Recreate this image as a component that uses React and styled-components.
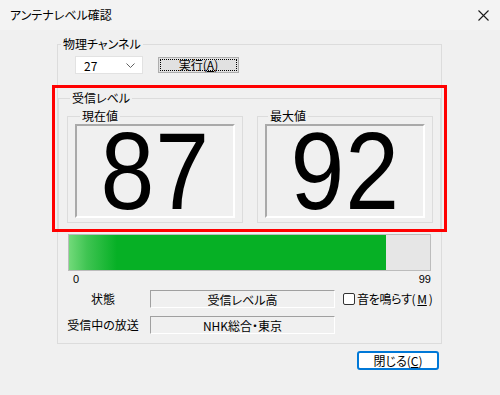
import React from "react";
import styled, { createGlobalStyle } from "styled-components";

const GlobalStyle = createGlobalStyle`
  html, body {
    margin: 0;
    padding: 0;
    background: #f0f0f0;
  }
  #root {
    width: 500px;
    height: 395px;
  }
  * {
    box-sizing: border-box;
  }
`;

const FONT = `"Noto Sans CJK JP", "Noto Sans", sans-serif`;

function App() {
  return (
    <>
      <GlobalStyle />
      <StWindow>
        <StTitleBar>
          <StTitle>アンテナレベル確認</StTitle>
          <StClose>
            <svg width="11" height="11" viewBox="0 0 11 11">
              <path d="M0.5 0.5 L10.5 10.5 M10.5 0.5 L0.5 10.5" stroke="#1a1a1a" strokeWidth="1.1" />
            </svg>
          </StClose>
        </StTitleBar>

        <StBody>
          <StGroup>
            <StLegend $offset={3}>物理チャンネル</StLegend>
            <StChannelRow>
              <StCombo>
                <span>27</span>
                <svg width="9" height="5" viewBox="0 0 9 5">
                  <path d="M0.5 0.5 L4.5 4.5 L8.5 0.5" stroke="#606060" fill="none" strokeWidth="1" />
                </svg>
              </StCombo>
              <StPushButton>
                実行(<u>A</u>)
              </StPushButton>
            </StChannelRow>

            <StLevelArea>
              <StLevelGroup>
                <StLegend $offset={3}>受信レベル</StLegend>
                <StLevelGrid>
                  <StSubGroup>
                    <StLegend $offset={5}>現在値</StLegend>
                    <StDisplay>
                      <StDigits>87</StDigits>
                    </StDisplay>
                  </StSubGroup>
                  <StSubGroup>
                    <StLegend $offset={3}>最大値</StLegend>
                    <StDisplay>
                      <StDigits>92</StDigits>
                    </StDisplay>
                  </StSubGroup>
                </StLevelGrid>
              </StLevelGroup>
              <StHighlight />
            </StLevelArea>

            <StMeter>
              <StMeterFill style={{ width: `${(87 / 99) * 100}%` }} />
            </StMeter>
            <StScale>
              <span>0</span>
              <span>99</span>
            </StScale>

            <StInfoGrid>
              <StInfoLabel>状態</StInfoLabel>
              <StInfoField>受信レベル高</StInfoField>
              <StCheckLabel>
                <StCheckBox />
                音を鳴らす(<u>M</u>)
              </StCheckLabel>
              <StInfoLabel>受信中の放送</StInfoLabel>
              <StInfoField>NHK総合・東京</StInfoField>
            </StInfoGrid>
          </StGroup>

          <StFooter>
            <StDefaultButton>
              閉じる(<u>C</u>)
            </StDefaultButton>
          </StFooter>
        </StBody>
      </StWindow>
    </>
  );
}

export default App;

const StWindow = styled.div`
  width: 500px;
  height: 395px;
  display: flex;
  flex-direction: column;
  background: #f0f0f0;
  font-family: ${FONT};
  font-feature-settings: "palt";
  font-size: 12px;
  color: #000;
`;

const StTitleBar = styled.div`
  height: 30px;
  flex-shrink: 0;
  display: flex;
  align-items: center;
  justify-content: space-between;
  padding: 0 11px 0 10px;
  background: #f3f3f3;
`;

const StTitle = styled.div`
  font-size: 12px;
  line-height: 14px;
`;

const StClose = styled.div`
  width: 11px;
  height: 11px;
  display: flex;
`;

const StBody = styled.div`
  padding: 7px 58px 0 57px;
`;

const StGroup = styled.fieldset`
  margin: 0;
  padding: 5px 0 9px 0;
  border: 1px solid #dcdcdc;
  min-width: 0;
`;

const StLegend = styled.legend`
  margin-left: ${(p) => p.$offset}px;
  padding: 0 2px;
  font-size: 12px;
  line-height: 14px;
`;

const StChannelRow = styled.div`
  display: flex;
  align-items: flex-start;
  padding-left: 17px;
  height: 18px;
`;

const StCombo = styled.div`
  width: 68px;
  height: 18px;
  display: flex;
  align-items: center;
  justify-content: space-between;
  padding: 0 7px 0 8px;
  background: #fff;
  border: 1px solid #e2e2e2;
  font-size: 12px;
`;

const StPushButton = styled.div`
  margin: 1px 0 0 15px;
  width: 81px;
  height: 16px;
  display: flex;
  align-items: center;
  justify-content: center;
  background: #e1e1e1;
  border: 1px solid #adadad;
  outline: 1px dotted #000;
  outline-offset: -3px;
  font-size: 12px;
  line-height: 14px;

  u {
    text-underline-offset: 1px;
  }
`;

const StLevelArea = styled.div`
  position: relative;
  margin-top: 17px;
`;

const StLevelGroup = styled.fieldset`
  margin: 0;
  padding: 4px 7px 6px 8px;
  border: 1px solid #dcdcdc;
  min-width: 0;
`;

const StLevelGrid = styled.div`
  display: grid;
  grid-template-columns: 176px 176px;
  column-gap: 14px;
`;

const StSubGroup = styled.fieldset`
  margin: 0;
  padding: 1px 7px 4px 7px;
  border: 1px solid #dcdcdc;
  min-width: 0;
`;

const StDisplay = styled.div`
  height: 94px;
  display: flex;
  align-items: center;
  justify-content: center;
  border-top: 2px solid #a9a9a9;
  border-left: 2px solid #a9a9a9;
  border-right: 2px solid #ffffff;
  border-bottom: 2px solid #ffffff;
`;

const StDigits = styled.div`
  font-family: "Liberation Sans", Arial, sans-serif;
  font-size: 110px;
  line-height: 88px;
  letter-spacing: 1px;
  transform: scaleX(0.88);
  color: #000;
`;

const StHighlight = styled.div`
  position: absolute;
  top: -6px;
  left: -6px;
  right: -6px;
  bottom: -2px;
  border: 3px solid #ff0000;
  pointer-events: none;
`;

const StMeter = styled.div`
  margin: 4px 0 0 10px;
  width: 363px;
  height: 37px;
  border: 1px solid #bcbcbc;
  background: #e6e6e6;
`;

const StMeterFill = styled.div`
  height: 100%;
  background: linear-gradient(to right, #72da7a 0px, #3fc452 18px, #06b025 48px, #06b025 100%);
`;

const StScale = styled.div`
  margin: 3px 0 0 10px;
  width: 363px;
  display: flex;
  justify-content: space-between;
  padding-left: 5px;
  font-family: "Liberation Sans", Arial, sans-serif;
  font-size: 11px;
  line-height: 10px;
`;

const StInfoGrid = styled.div`
  margin: 6px 0 0 5px;
  display: grid;
  grid-template-columns: 80px 185px auto;
  grid-auto-rows: 18px;
  column-gap: 7px;
  row-gap: 8px;
  align-items: center;
`;

const StInfoLabel = styled.div`
  text-align: center;
  font-size: 12px;
  line-height: 14px;
`;

const StInfoField = styled.div`
  height: 18px;
  display: flex;
  align-items: center;
  justify-content: center;
  border-top: 1px solid #a0a0a0;
  border-left: 1px solid #a0a0a0;
  border-right: 1px solid #ffffff;
  border-bottom: 1px solid #ffffff;
  font-size: 12px;
`;

const StCheckLabel = styled.div`
  margin-left: 1px;
  display: flex;
  align-items: center;
  gap: 2px;
  font-size: 12px;
  line-height: 14px;
  letter-spacing: -0.3px;

  u {
    text-underline-offset: 1px;
  }
`;

const StCheckBox = styled.span`
  width: 12px;
  height: 12px;
  border: 1px solid #333;
  border-radius: 2px;
  background: #fff;
`;

const StFooter = styled.div`
  display: flex;
  justify-content: flex-end;
  padding: 7px 3px 0 0;
`;

const StDefaultButton = styled.div`
  width: 82px;
  height: 19px;
  display: flex;
  align-items: center;
  justify-content: center;
  background: #fff;
  border: 2px solid #0078d7;
  border-radius: 3px;
  font-size: 12px;
  line-height: 14px;

  u {
    text-underline-offset: 1px;
  }
`;
